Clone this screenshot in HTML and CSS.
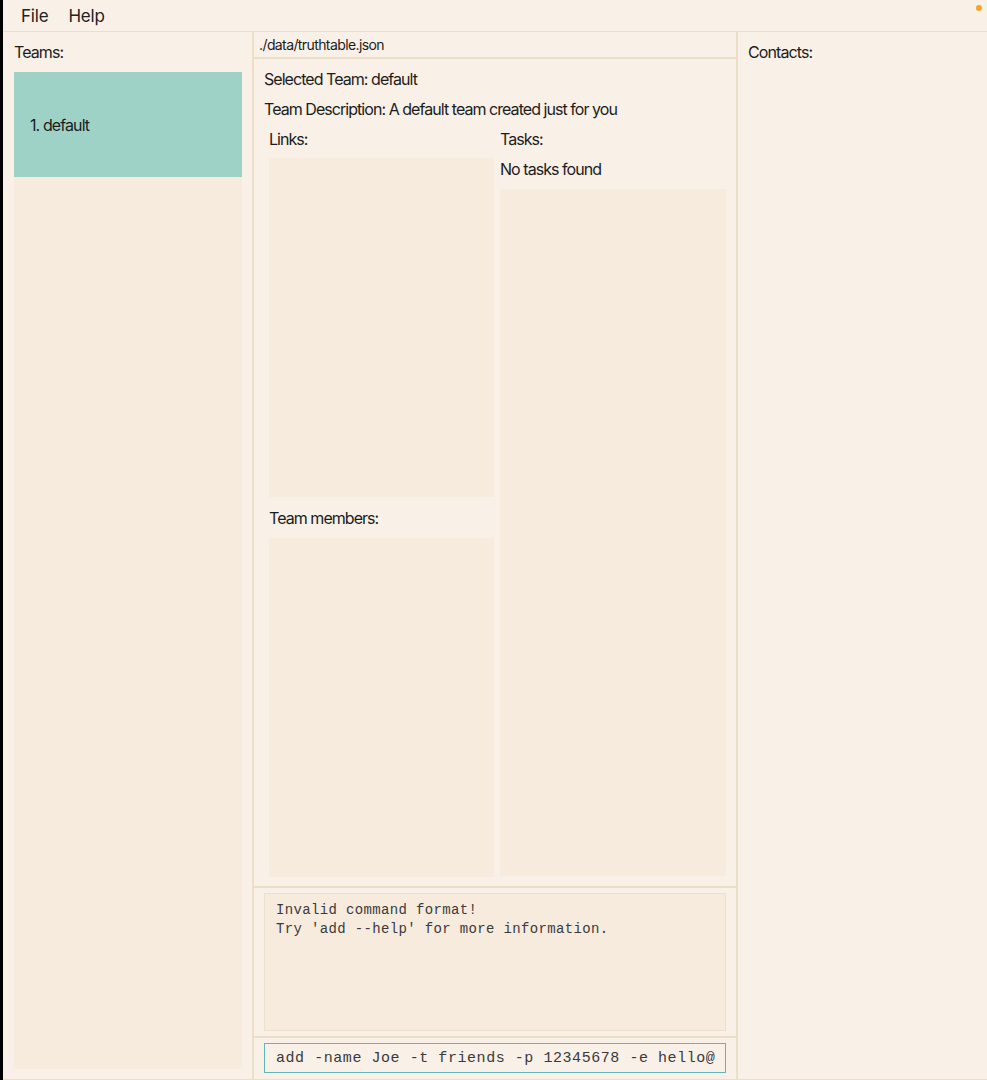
FILE: index.html
```html
<!DOCTYPE html>
<html>
<head>
<meta charset="utf-8">
<link rel="stylesheet" href="styles.css">
</head>
<body>
<div class="window">
  <div class="menubar">
    <span class="menu-item">File</span>
    <span class="menu-item">Help</span>
    <span class="dot"></span>
  </div>
  <div class="main">
    <div class="col-left">
      <div class="label">Teams:</div>
      <div class="list">
        <div class="team-card">1. default</div>
      </div>
    </div>
    <div class="col-mid">
      <div class="pathbar">./data/truthtable.json</div>
      <div class="team-view">
        <div class="line">Selected Team: default</div>
        <div class="line">Team Description: A default team created just for you</div>
        <div class="cols">
          <div class="sub-left">
            <div class="sub-label">Links:</div>
            <div class="box box-links"></div>
            <div class="sub-label members">Team members:</div>
            <div class="box box-members"></div>
          </div>
          <div class="sub-right">
            <div class="sub-label">Tasks:</div>
            <div class="sub-label">No tasks found</div>
            <div class="box box-tasks"></div>
          </div>
        </div>
      </div>
      <div class="result-wrap">
        <div class="result">Invalid command format!
Try 'add --help' for more information.</div>
      </div>
      <div class="cmd-wrap">
        <div class="cmd">add -name Joe -t friends -p 12345678 -e hello@</div>
      </div>
    </div>
    <div class="col-right">
      <div class="label">Contacts:</div>
    </div>
  </div>
</div>
</body>
</html>
```
FILE: styles.css
```css
* { box-sizing: border-box; }
html, body { margin: 0; padding: 0; }
body {
  width: 987px;
  height: 1080px;
  overflow: hidden;
  background: #f9f0e7;
  font-family: Inter, "Noto Sans", sans-serif;
  color: #1c1c1c;
}
.window {
  height: 1080px;
  border-left: 3px solid #000;
  display: flex;
  flex-direction: column;
}
.menubar {
  height: 32px;
  border-bottom: 1px solid #ecdfc8;
  display: flex;
  align-items: center;
  padding-left: 18px;
  padding-top: 1px;
  position: relative;
}
.menu-item {
  font-size: 17px;
  margin-right: 20px;
  color: #222;
  line-height: 31px;
  letter-spacing: -0.2px;
}
.dot {
  position: absolute;
  right: 5px;
  top: 5px;
  width: 6px;
  height: 6px;
  border-radius: 50%;
  background: #f5a623;
}
.main {
  flex: 1;
  display: flex;
  border-bottom: 1px solid #ecdfc8;
}
.label {
  font-size: 16px;
  line-height: 20px;
  letter-spacing: -0.9px;
}
.col-left {
  width: 251px;
  border-right: 2px solid #ecdfc8;
  padding: 10px 10px 10px 11px;
  display: flex;
  flex-direction: column;
  gap: 10px;
}
.list {
  flex: 1;
  background: #f7ebde;
}
.team-card {
  height: 105px;
  background: #9fd2c6;
  display: flex;
  align-items: center;
  padding-left: 16px;
  font-size: 16px;
  letter-spacing: -0.9px;
}
.col-mid {
  width: 484px;
  border-right: 2px solid #ecdfc8;
  display: flex;
  flex-direction: column;
}
.pathbar {
  height: 27px;
  border-bottom: 2px solid #ecdfc8;
  font-size: 14px;
  line-height: 25px;
  padding-left: 5px;
  letter-spacing: -0.6px;
}
.team-view {
  flex: 1;
  border-bottom: 2px solid #ecdfc8;
  padding: 10px 10px 9px 10px;
  display: flex;
  flex-direction: column;
  gap: 10px;
}
.line {
  font-size: 16px;
  line-height: 20px;
  letter-spacing: -0.95px;
}
.cols {
  flex: 1;
  display: grid;
  grid-template-columns: 231px 231px;
}
.sub-left {
  padding: 0 1px 0 5px;
  display: flex;
  flex-direction: column;
}
.sub-right {
  padding: 0 0 1px 5px;
  display: flex;
  flex-direction: column;
  gap: 10px;
}
.sub-label {
  font-size: 16px;
  line-height: 20px;
  letter-spacing: -0.95px;
}
.sub-left .sub-label { margin-bottom: 9px; }
.sub-left .members { margin-top: 11px; margin-bottom: 10px; }
.box { background: #f7ebde; }
.box-links, .box-members { height: 339px; }
.box-tasks { flex: 1; }
.result-wrap {
  height: 150px;
  border-bottom: 2px solid #ecdfc8;
  padding: 5px 10px;
}
.result {
  height: 138px;
  background: #f7ebde;
  border: 1px solid #ede1cd;
  font-family: "Liberation Mono", monospace;
  font-size: 14px;
  letter-spacing: 0.35px;
  line-height: 19px;
  white-space: pre;
  color: #3a3a3a;
  padding: 7px 11px;
}
.cmd-wrap {
  flex: 1;
  padding: 5px 10px;
}
.cmd {
  height: 30px;
  border: 1px solid #5fb7b8;
  background: #f9f0e7;
  font-family: "Liberation Mono", monospace;
  font-size: 15px;
  letter-spacing: 0.55px;
  line-height: 30px;
  color: #3a3a3a;
  padding-left: 11px;
  white-space: pre;
  overflow: hidden;
}
.col-right {
  flex: 1;
  padding: 10px 10px 10px 10px;
}
```
